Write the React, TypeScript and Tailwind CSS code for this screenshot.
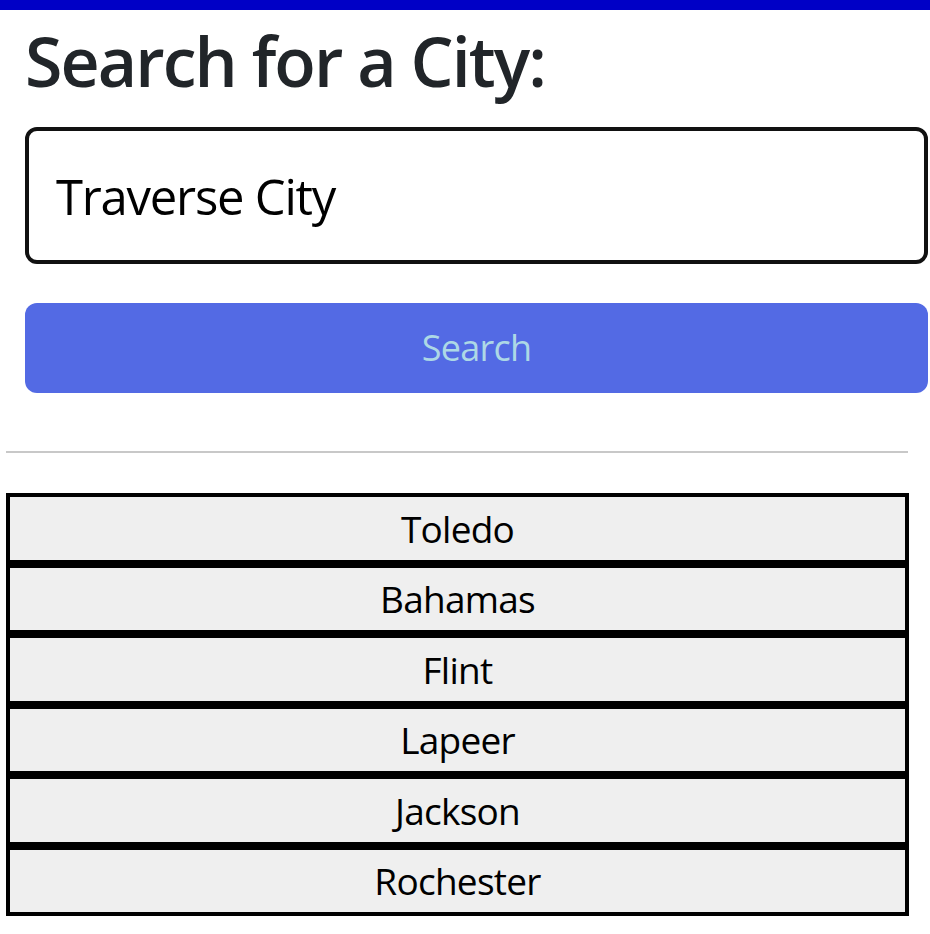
const cities = ["Toledo", "Bahamas", "Flint", "Lapeer", "Jackson", "Rochester"];

const font = { fontFamily: '"Open Sans", "Noto Sans", sans-serif' };

export default function App() {
  return (
    <div className="min-h-[934px] w-[930px] bg-white" style={font}>
      <div className="h-[10px] bg-[#0000c6]" />

      <div className="ml-[25px] w-[903px]">
        <h1 className="mt-[9px] text-[68px] leading-[84px] font-semibold tracking-[-0.028em] text-[#212529]">
          Search for a City:
        </h1>

        <input
          readOnly
          defaultValue="Traverse City"
          className="mt-[24px] block h-[137px] w-full rounded-[12px] border-4 border-[#111] bg-white px-[27px] text-[49px] tracking-[-0.025em] text-black outline-none"
          style={font}
        />

        <button
          className="mt-[39px] block h-[90px] w-full rounded-[12px] bg-[#536ae4] text-[36px] tracking-[-0.02em] text-[#add8e6]"
          style={font}
        >
          Search
        </button>
      </div>

      <hr className="ml-[6px] mt-[58px] w-[902px] border-t-2 border-[#c8c8c8]" />

      <div className="ml-[6px] mt-[40px] flex w-[903px] flex-col">
        {cities.map((city) => (
          <button
            key={city}
            className="block h-[70.5px] w-full border-4 border-black bg-[#efefef] text-[37px] tracking-[-0.02em] text-black"
            style={font}
          >
            {city}
          </button>
        ))}
      </div>
    </div>
  );
}
